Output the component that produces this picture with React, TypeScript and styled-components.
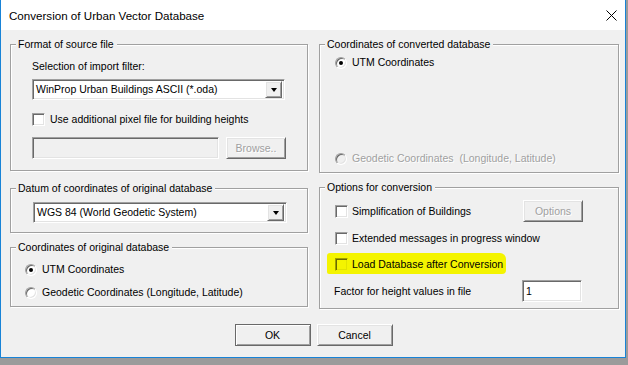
import React from 'react';
import styled, { createGlobalStyle, css } from 'styled-components';

const GlobalStyle = createGlobalStyle`
  html, body {
    margin: 0;
    padding: 0;
  }
  body {
    background: #9b9b9b;
    font-family: 'Liberation Sans', Arial, sans-serif;
    font-size: 10.5px;
    color: #000;
  }
`;

const Screen = styled.div`
  width: 628px;
  height: 365px;
  background: #9b9b9b;
  overflow: hidden;
`;

const Window = styled.div`
  width: 626px;
  height: 358px;
  box-sizing: border-box;
  border: 1px solid #1883d7;
  border-top: none;
  background: #f0f0f0;
  display: flex;
  flex-direction: column;
`;

const TitleBar = styled.div`
  height: 30px;
  flex: none;
  background: #fff;
  display: flex;
  align-items: center;
  justify-content: space-between;
  padding: 0 8px;
`;

const Title = styled.span`
  font-size: 11.6px;
  line-height: 14px;
  padding-top: 1px;
`;

const Body = styled.div`
  padding: 14px 5px 0 9px;
  display: flex;
  flex-direction: column;
`;

const Columns = styled.div`
  display: grid;
  grid-template-columns: 299px 301px;
  column-gap: 10px;
`;

const Column = styled.div`
  display: flex;
  flex-direction: column;
`;

const Group = styled.div<{ $h: number; $mt?: number; $pad: string }>`
  position: relative;
  box-sizing: border-box;
  width: calc(100% - 1px);
  height: ${(p) => p.$h}px;
  margin-top: ${(p) => p.$mt ?? 0}px;
  padding: ${(p) => p.$pad};
  border: 1px solid #a0a0a0;
  box-shadow: inset 1px 1px 0 #fff, 1px 1px 0 #fff;
  display: flex;
  flex-direction: column;
  align-items: flex-start;
`;

const Legend = styled.span`
  position: absolute;
  top: -7px;
  left: 5px;
  padding: 0 3px 0 2px;
  line-height: 13px;
  background: #f0f0f0;
  white-space: nowrap;
`;

const Label = styled.span<{ $disabled?: boolean }>`
  line-height: 13px;
  white-space: nowrap;
  ${(p) =>
    p.$disabled &&
    css`
      color: #a0a0a0;
      text-shadow: 1px 1px 0 #fff;
    `}
`;

const sunken = css`
  box-sizing: border-box;
  border: 1px solid;
  border-color: #a0a0a0 #fff #fff #a0a0a0;
  box-shadow: inset 1px 1px 0 #696969, inset -1px -1px 0 #e3e3e3;
`;

const raised = css`
  box-sizing: border-box;
  border: 1px solid;
  border-color: #fff #696969 #696969 #fff;
  box-shadow: inset 1px 1px 0 #e3e3e3, inset -1px -1px 0 #a0a0a0;
  background: #f0f0f0;
`;

const Combo = styled.div<{ $w: number }>`
  ${sunken};
  width: ${(p) => p.$w}px;
  height: 21px;
  background: #fff;
  display: flex;
  align-items: center;
  padding: 2px;
`;

const ComboText = styled.span`
  flex: 1;
  padding-left: 1px;
  line-height: 13px;
  white-space: nowrap;
`;

const DropButton = styled.div`
  ${raised};
  width: 17px;
  height: 17px;
  display: flex;
  align-items: center;
  justify-content: center;

  &::after {
    content: '';
    border-left: 3.5px solid transparent;
    border-right: 3.5px solid transparent;
    border-top: 4px solid #000;
    margin-top: 1px;
  }
`;

const Row = styled.div<{ $mt?: number }>`
  display: flex;
  align-items: center;
  gap: 5px;
  margin-top: ${(p) => p.$mt ?? 0}px;
  align-self: stretch;
`;

const Check = styled.span<{ $marked?: boolean }>`
  ${sunken};
  width: 13px;
  height: 13px;
  flex: none;
  background: #fff;
  ${(p) =>
    p.$marked &&
    css`
      background: #f4f400;
      border-color: #a0a000 #f4f400 #f4f400 #a0a000;
      box-shadow: inset 1px 1px 0 #696900, inset -1px -1px 0 #e3e300;
    `}
`;

const Radio = styled.span<{ $on?: boolean; $disabled?: boolean }>`
  box-sizing: border-box;
  width: 12px;
  height: 12px;
  flex: none;
  border-radius: 50%;
  border: 1px solid;
  border-color: #a0a0a0 #fff #fff #a0a0a0;
  box-shadow: inset 1px 1px 0 #696969, inset -1px -1px 0 #e3e3e3;
  background: ${(p) => (p.$disabled ? '#f0f0f0' : '#fff')};
  display: flex;
  align-items: center;
  justify-content: center;

  &::after {
    content: '';
    width: 4px;
    height: 4px;
    border-radius: 50%;
    background: #000;
    display: ${(p) => (p.$on ? 'block' : 'none')};
  }
`;

const Edit = styled.div<{ $w: number; $disabled?: boolean }>`
  ${sunken};
  width: ${(p) => p.$w}px;
  height: 22px;
  background: ${(p) => (p.$disabled ? '#f0f0f0' : '#fff')};
  padding: 2px 3px;
  line-height: 16px;
`;

const Button = styled.div<{ $w?: number; $disabled?: boolean; $default?: boolean }>`
  ${raised};
  width: ${(p) => p.$w ?? 76}px;
  height: 22px;
  flex: none;
  display: flex;
  align-items: center;
  justify-content: center;
  line-height: 13px;
  ${(p) =>
    p.$disabled &&
    css`
      color: #a0a0a0;
      text-shadow: 1px 1px 0 #fff;
    `}
  ${(p) =>
    p.$default &&
    css`
      border-color: #696969;
      box-shadow: inset 1px 1px 0 #fff, inset -1px -1px 0 #a0a0a0;
    `}
`;

const Marker = styled.div`
  display: flex;
  align-items: center;
  gap: 4px;
  margin: 8px 0 0 -8px;
  padding: 5px 3px 3px 8px;
  background: #f4f400;
  border-radius: 3px 6px 4px 2px;
`;

const Spacer = styled.div`
  flex: 1;
`;

const ButtonRow = styled.div`
  display: flex;
  justify-content: center;
  gap: 6px;
  margin-top: 15px;
  padding-right: 3px;
`;

const CloseIcon = () => (
  <svg width="11" height="11" viewBox="0 0 11 11">
    <path d="M0.5 0.5 L10.5 10.5 M10.5 0.5 L0.5 10.5" stroke="#000" strokeWidth="1" fill="none" />
  </svg>
);

const App = () => {
  return (
    <Screen>
      <GlobalStyle />
      <Window>
        <TitleBar>
          <Title>Conversion of Urban Vector Database</Title>
          <CloseIcon />
        </TitleBar>
        <Body>
          <Columns>
            <Column>
              <Group $h={127} $pad="15px 0 0 21px">
                <Legend>Format of source file</Legend>
                <Label>Selection of import filter:</Label>
                <Combo $w={253} style={{ marginTop: 6 }}>
                  <ComboText>WinProp Urban Buildings ASCII (*.oda)</ComboText>
                  <DropButton />
                </Combo>
                <Row $mt={13}>
                  <Check />
                  <Label>Use additional pixel file for building heights</Label>
                </Row>
                <Row $mt={11} style={{ gap: 7 }}>
                  <Edit $w={187} $disabled />
                  <Button $w={60} $disabled>
                    Browse..
                  </Button>
                </Row>
              </Group>
              <Group $h={45} $mt={17} $pad="13px 0 0 22px">
                <Legend>Datum of coordinates of original database</Legend>
                <Combo $w={254}>
                  <ComboText>WGS 84 (World Geodetic System)</ComboText>
                  <DropButton />
                </Combo>
              </Group>
              <Group $h={60} $mt={14} $pad="15px 0 0 14px">
                <Legend>Coordinates of original database</Legend>
                <Row>
                  <Radio $on />
                  <Label>UTM Coordinates</Label>
                </Row>
                <Row $mt={10}>
                  <Radio />
                  <Label>Geodetic Coordinates (Longitude, Latitude)</Label>
                </Row>
              </Group>
            </Column>
            <Column>
              <Group $h={129} $pad="11px 0 7px 15px">
                <Legend>Coordinates of converted database</Legend>
                <Row>
                  <Radio $on />
                  <Label>UTM Coordinates</Label>
                </Row>
                <Spacer />
                <Row>
                  <Radio $disabled />
                  <Label $disabled>Geodetic Coordinates{'\u00a0'} (Longitude, Latitude)</Label>
                </Row>
              </Group>
              <Group $h={122} $mt={14} $pad="12px 35px 0 15px">
                <Legend>Options for conversion</Legend>
                <Row style={{ gap: 4 }}>
                  <Check />
                  <Label>Simplification of Buildings</Label>
                  <Spacer />
                  <Button $w={60} $disabled>
                    Options
                  </Button>
                </Row>
                <Row $mt={10} style={{ gap: 4 }}>
                  <Check />
                  <Label>Extended messages in progress window</Label>
                </Row>
                <Marker>
                  <Check $marked />
                  <Label>Load Database after Conversion</Label>
                </Marker>
                <Row $mt={6}>
                  <Label style={{ marginLeft: -1 }}>Factor for height values in file</Label>
                  <Spacer />
                  <Edit $w={60} style={{ marginRight: 1 }}>
                    1
                  </Edit>
                </Row>
              </Group>
            </Column>
          </Columns>
          <ButtonRow>
            <Button $default>OK</Button>
            <Button>Cancel</Button>
          </ButtonRow>
        </Body>
      </Window>
    </Screen>
  );
};

export default App;
